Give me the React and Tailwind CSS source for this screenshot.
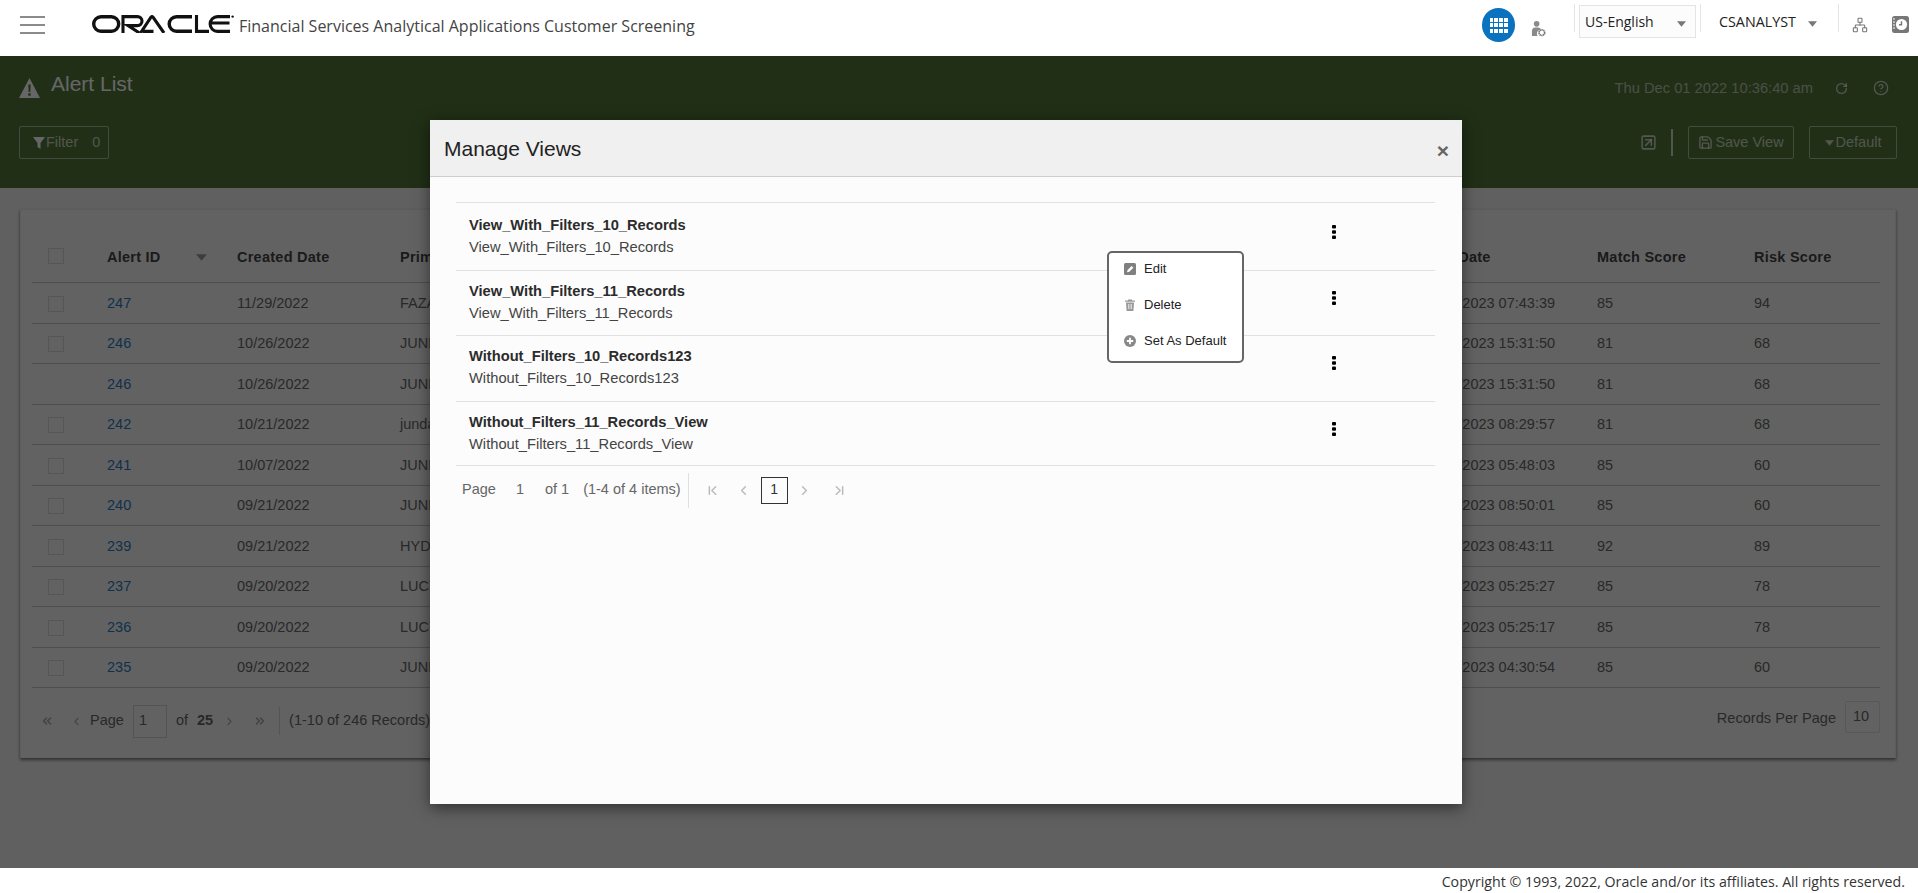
import React from "react";
import {
  ChevronLeft, ChevronRight, ChevronFirst, ChevronLast, ChevronsLeft, ChevronsRight,
  Network, RotateCw, CircleHelp, Save, SquareArrowUpRight,
} from "lucide-react";

const rows = [
  { id: "247", created: "11/29/2022", name: "FAZAL AHMED", run: "01/05/2023 07:43:39", match: "85", risk: "94", check: true },
  { id: "246", created: "10/26/2022", name: "JUNDALLAH", run: "01/04/2023 15:31:50", match: "81", risk: "68", check: true },
  { id: "246", created: "10/26/2022", name: "JUNDALLAH", run: "01/04/2023 15:31:50", match: "81", risk: "68", check: false },
  { id: "242", created: "10/21/2022", name: "jundallah", run: "01/04/2023 08:29:57", match: "81", risk: "68", check: true },
  { id: "241", created: "10/07/2022", name: "JUNDALLAH", run: "01/03/2023 05:48:03", match: "85", risk: "60", check: true },
  { id: "240", created: "09/21/2022", name: "JUNDALLAH", run: "01/03/2023 08:50:01", match: "85", risk: "60", check: true },
  { id: "239", created: "09/21/2022", name: "HYDER", run: "01/03/2023 08:43:11", match: "92", risk: "89", check: true },
  { id: "237", created: "09/20/2022", name: "LUCY", run: "01/02/2023 05:25:27", match: "85", risk: "78", check: true },
  { id: "236", created: "09/20/2022", name: "LUCY", run: "01/02/2023 05:25:17", match: "85", risk: "78", check: true },
  { id: "235", created: "09/20/2022", name: "JUNDALLAH", run: "01/02/2023 04:30:54", match: "85", risk: "60", check: true },
];

const views = [
  { name: "View_With_Filters_10_Records", h: "h-[68px] pt-[11px]" },
  { name: "View_With_Filters_11_Records", h: "h-[65px] pt-[9px]" },
  { name: "Without_Filters_10_Records123", h: "h-[66px] pt-[9px]" },
  { name: "Without_Filters_11_Records_View", h: "h-[64px] pt-[9px]" },
];

const COLS = "grid grid-cols-[75px_130px_163px_1025px_172px_157px_126px] items-center";

function Caret({ className }) {
  return (
    <svg viewBox="0 0 10 6" className={className}>
      <path d="M0 0h10L5 6z" fill="currentColor" />
    </svg>
  );
}

function Logo() {
  return (
    <svg viewBox="0 0 142 18" className="w-[142px] h-[18px] shrink-0" fill="none" stroke="#111">
      <rect x="1.7" y="1.7" width="25" height="14.600" rx="7.300" strokeWidth="3.400" />
      <path d="M31 18V1.600h14.500a4.500 4.500 0 0 1 0 9H36L47.500 18" strokeWidth="3.100" />
      <path d="M51 16.400h10.500M48.500 18L59 2.200c.6-.9 1.400-.9 2 0L72 18" strokeWidth="3.100" />
      <path d="M100 1.700H84.500a7.300 7.300 0 0 0 0 14.600H100" strokeWidth="3.400" />
      <path d="M104.500 0v16.400H117" strokeWidth="3.100" />
      <path d="M138 1.600h-12.500a7.400 7.400 0 0 0 0 14.800H138M119.500 8h18" strokeWidth="3.100" />
      <circle cx="140.600" cy="1.600" r="1.200" fill="#111" stroke="none" />
    </svg>
  );
}

function GridCircle() {
  return (
    <div className="w-[33px] h-[34px] rounded-full bg-[#0a72bf] flex items-center justify-center shrink-0">
      <div className="grid grid-cols-4 gap-[1.500px] w-[18px]">
        {Array.from({ length: 12 }).map((_, i) => (
          <span key={i} className="h-[4px] bg-white block" />
        ))}
      </div>
    </div>
  );
}

function UserGear() {
  return (
    <svg viewBox="0 0 16 17" className="w-[15px] h-[16px] shrink-0">
      <circle cx="6" cy="3" r="3" fill="#8a8a8a" />
      <path d="M1 16V10.500C1 8.500 2.500 7 4.500 7h3c1.500 0 2.500.8 3 2a4.500 4.500 0 0 0-3.500 7z" fill="#8a8a8a" />
      <circle cx="11.600" cy="12.400" r="3" fill="none" stroke="#7a7a7a" strokeWidth="1.800" strokeDasharray="1.500 .4" />
    </svg>
  );
}

function ClockBook() {
  return (
    <svg viewBox="0 0 17 17" className="w-[17px] h-[17px] shrink-0">
      <rect x="0" y="0" width="17" height="17" rx="2.500" fill="#777" />
      <circle cx="9.500" cy="8.500" r="5.600" fill="#fff" />
      <path d="M9.500 5.200v3.600H7" fill="none" stroke="#777" strokeWidth="1.400" />
      <path d="M1 3h2M1 6h2M1 9h2M1 12h2" stroke="#fff" strokeWidth="1" />
    </svg>
  );
}

function Kebab({ className }) {
  return (
    <svg viewBox="0 0 4 14" className={className}>
      <rect width="4" height="3.600" rx="1" fill="#000" />
      <rect y="5.200" width="4" height="3.600" rx="1" fill="#000" />
      <rect y="10.400" width="4" height="3.600" rx="1" fill="#000" />
    </svg>
  );
}

function Box() {
  return <span className="block w-[16px] h-[16px] border border-[#d8d8d8] bg-[#f4f4f4]" />;
}

function Header() {
  return (
    <header className="relative z-10 h-14 shrink-0 bg-white flex items-center pl-[20px] pr-[9px] font-['Open_Sans',sans-serif]">
      <div className="w-[25px] flex flex-col gap-[6px] shrink-0 mt-[-7px]">
        <span className="block h-[2px] bg-[#8b8b8b]" />
        <span className="block h-[2px] bg-[#8b8b8b]" />
        <span className="block h-[2px] bg-[#8b8b8b]" />
      </div>
      <div className="ml-[47px] mt-[-8px] flex items-center">
        <Logo />
        <span className="ml-[5px] mt-[4px] text-[16px] text-[#444] whitespace-nowrap">
          Financial Services Analytical Applications Customer Screening
        </span>
      </div>
      <div className="ml-auto flex items-center mt-[-6px]">
        <GridCircle />
        <div className="ml-[16px] mt-[7px]"><UserGear /></div>
        <span className="ml-[28px] w-px h-[28px] bg-[#e4e4e4] block mt-[-14px]" />
        <div className="ml-[4px] w-[117px] h-[33px] border border-[#e4e4e4] bg-[#fcfcfc] flex items-center pl-[5px] text-[14px] text-[#222] mt-[-7px]">
          US-English
          <Caret className="w-[9px] h-[6px] ml-auto mr-[9px] text-[#777] mt-[4px]" />
        </div>
        <span className="ml-[4px] w-px h-[28px] bg-[#e4e4e4] block mt-[-14px]" />
        <span className="ml-[18px] w-[78px] text-[14.300px] text-[#222] whitespace-nowrap mt-[-7px]">CSANALYST</span>
        <Caret className="w-[9px] h-[6px] ml-[11px] text-[#777] mt-[-3px]" />
        <span className="ml-[21px] w-px h-[28px] bg-[#e4e4e4] block mt-[-14px]" />
        <Network className="ml-[13px] w-[16px] h-[16px] text-[#777]" strokeWidth={1.6} />
        <div className="ml-[24px] mt-[-2px]"><ClockBook /></div>
      </div>
    </header>
  );
}

function GreenBand() {
  return (
    <section className="h-[132px] shrink-0 bg-[#527639] pl-[19px] pr-[21px] flex flex-col text-white">
      <div className="h-[70px] flex items-center shrink-0 pb-[14px]">
        <svg viewBox="0 0 21 20" className="w-[21px] h-[20px] mt-[8px]">
          <path d="M10.500 0L21 20H0z" fill="#fff" />
          <path d="M9.300 6.500h2.400l-.4 7.500H9.700zM9.300 15.300h2.400v2.400H9.300z" fill="#527639" />
        </svg>
        <span className="ml-[11px] text-[21px]">Alert List</span>
        <span className="ml-auto text-[14.700px] text-white/60 mt-[8px] mr-[22px]">Thu Dec 01 2022 10:36:40 am</span>
        <RotateCw className="w-[13px] h-[13px] text-white/70 mr-[25px] mt-[8px]" strokeWidth={2.5} />
        <CircleHelp className="w-[16px] h-[16px] text-white/70 mr-[8px] mt-[8px]" strokeWidth={2} />
      </div>
      <div className="flex items-center h-[33px] text-[14.500px]">
        <div className="w-[90px] h-[33px] border border-white/50 rounded-[2px] flex items-center pl-[13px] pt-[1px] text-white/70">
          <svg viewBox="0 0 12 12" className="w-[12px] h-[12px]"><path d="M0 0h12L7.500 6v6L4.500 10V6z" fill="#fff" /></svg>
          <span className="ml-[1px]">Filter</span>
          <span className="ml-[14px]">0</span>
        </div>
        <SquareArrowUpRight className="ml-auto w-[17px] h-[17px] text-white/70" strokeWidth={2.2} />
        <span className="ml-[14px] w-[2px] h-[27px] bg-white/70 block" />
        <div className="ml-[15px] w-[106px] h-[33px] border border-white/50 rounded-[2px] flex items-center justify-center text-white/70">
          <Save className="w-[15px] h-[15px] mr-[2px]" strokeWidth={2.2} />Save View
        </div>
        <div className="ml-[15px] w-[88px] h-[33px] border border-white/50 rounded-[2px] flex items-center justify-center text-white/70">
          <Caret className="w-[9px] h-[6px] mr-[2px]" />Default
        </div>
      </div>
    </section>
  );
}

function AlertTable() {
  return (
    <section className="flex-1 bg-[#f0f0f0] pt-[21px] px-[20px]">
      <div className="h-[549px] w-[1876px] bg-[#f6f6f6] border-t border-x border-[#e6e6e6] shadow-[0_2px_3px_rgba(0,0,0,0.5)] pl-[11px] pr-[15px] pt-[23px] text-[14.500px] text-[#666]">
        <div className={`${COLS} h-[50px] border-b border-[#c4c4c4] font-bold text-[#444] tracking-[0.25px]`}>
          <div className="pl-[16px] pb-[4px]"><Box /></div>
          <div className="flex items-center">
            Alert ID
            <Caret className="w-[11px] h-[7px] ml-[35px] text-[#999]" />
          </div>
          <div>Created Date</div>
          <div>Primary Name</div>
          <div>Run Date</div>
          <div>Match Score</div>
          <div>Risk Score</div>
        </div>
        {rows.map((r, i) => (
          <div key={i} className={`${COLS} h-[40.500px] border-b border-[#c4c4c4] pt-[2px]`}>
            <div className="pl-[16px]">{r.check ? <Box /> : null}</div>
            <div className="text-[#2a7ac0]">{r.id}</div>
            <div>{r.created}</div>
            <div>{r.name}</div>
            <div className="whitespace-nowrap ml-[-3px]">{r.run}</div>
            <div>{r.match}</div>
            <div>{r.risk}</div>
          </div>
        ))}
        <div className="h-[64px] flex items-center">
          <div className="flex items-center mt-[2px]">
            <ChevronsLeft className="ml-[8px] w-[14px] h-[14px] text-[#aaa]" strokeWidth={2.8} />
            <ChevronLeft className="ml-[16px] w-[13px] h-[13px] text-[#aaa]" strokeWidth={2} />
            <span className="ml-[7px]">Page</span>
            <div className="ml-[9px] w-[34px] h-[33px] border border-[#cfcfcf] pl-[5px] flex items-center">1</div>
            <span className="ml-[9px]">of</span>
            <span className="ml-[9px] font-bold">25</span>
            <ChevronRight className="ml-[10px] w-[13px] h-[13px] text-[#aaa]" strokeWidth={2} />
            <ChevronsRight className="ml-[17px] w-[14px] h-[14px] text-[#aaa]" strokeWidth={2.8} />
            <span className="ml-[12px] w-px h-[28px] bg-[#d4d4d4] block" />
            <span className="ml-[9px] whitespace-nowrap">(1-10 of 246 Records)</span>
          </div>
          <span className="ml-auto whitespace-nowrap text-[14.600px] mt-[-3px]">Records Per Page</span>
          <div className="ml-[9px] w-[35px] h-[32px] border border-[#dcdcdc] rounded-[2px] pl-[7px] flex items-center mt-[-6px]">10</div>
        </div>
      </div>
    </section>
  );
}

function PopupMenu() {
  return (
    <div className="absolute left-[677px] top-[131px] w-[137px] h-[112px] bg-white border-2 border-[#666] rounded-[5px] flex flex-col text-[13px] text-[#222] font-['Liberation_Sans',sans-serif]">
      <div className="h-[36px] flex items-center pl-[15px] gap-[8px] mt-[-2px]">
        <svg viewBox="0 0 12 12" className="w-[12px] h-[12px]">
          <rect width="12" height="12" rx="1.500" fill="#808080" />
          <path d="M3 9.300l.6-2.300 4-4 1.700 1.700-4 4z" fill="#fff" />
        </svg>
        Edit
      </div>
      <div className="h-[36px] flex items-center pl-[15px] gap-[8px]">
        <svg viewBox="0 0 12 12" className="w-[12px] h-[12px]">
          <path d="M4 1.500V.5h4v1h3v1.200H1V1.500zM2 3.500h8L9.400 12H2.600z" fill="#999" />
          <path d="M4.500 5v5M6 5v5M7.500 5v5" stroke="#fff" strokeWidth=".6" />
        </svg>
        Delete
      </div>
      <div className="h-[36px] flex items-center pl-[15px] gap-[8px]">
        <svg viewBox="0 0 12 12" className="w-[12px] h-[12px]">
          <circle cx="6" cy="6" r="6" fill="#888" />
          <path d="M6 2.800v6.400M2.800 6h6.400" stroke="#fff" strokeWidth="1.800" />
        </svg>
        Set As Default
      </div>
    </div>
  );
}

function ModalPager() {
  return (
    <div className="h-[48px] flex items-center text-[#666] text-[14.500px]">
      <span className="ml-[6px]">Page</span>
      <span className="ml-[20px]">1</span>
      <span className="ml-[21px]">of 1</span>
      <span className="ml-[14px] whitespace-nowrap">(1-4 of 4 items)</span>
      <span className="ml-[7px] w-px h-[35px] bg-[#e0e0e0] block" />
      <ChevronFirst className="ml-[16px] w-[15px] h-[15px] text-[#bbb]" strokeWidth={2.4} />
      <ChevronLeft className="ml-[16px] w-[15px] h-[15px] text-[#bbb]" strokeWidth={2.4} />
      <div className="ml-[10px] w-[27px] h-[27px] border border-[#333] flex items-center justify-center text-[#333] text-[14px] pb-[2px]">1</div>
      <ChevronRight className="ml-[9px] w-[15px] h-[15px] text-[#bbb]" strokeWidth={2.4} />
      <ChevronLast className="ml-[20px] w-[15px] h-[15px] text-[#bbb]" strokeWidth={2.4} />
    </div>
  );
}

function Modal() {
  return (
    <div className="absolute left-[430px] top-[64px] w-[1032px] h-[684px] bg-[#fcfcfc] shadow-[0_4px_14px_rgba(0,0,0,0.5)] flex flex-col font-['Liberation_Sans',sans-serif]">
      <div className="h-[57px] shrink-0 bg-[#f0f0f0] border-b border-[#cfcfcf] flex items-center pl-[14px] pr-[13px]">
        <h2 className="text-[21px] text-[#222] mt-[1px]">Manage Views</h2>
        <span className="ml-auto text-[21px] leading-none font-bold text-[#666] mt-[4px]">×</span>
      </div>
      <div className="pl-[26px] pr-[27px] pt-[25px]">
        <div className="border-t border-[#e2e2e2]">
          {views.map((v) => (
            <div key={v.name} className={`${v.h} border-b border-[#e2e2e2] pl-[13px] flex items-start`}>
              <div className="leading-[22px]">
                <div className="font-bold text-[14.700px] text-[#2b2b2b]">{v.name}</div>
                <div className="text-[14.700px] text-[#444]">{v.name}</div>
              </div>
              <Kebab className="absolute left-[902px] w-[4px] h-[14px] translate-y-[11px]" />
            </div>
          ))}
        </div>
        <ModalPager />
      </div>
      <PopupMenu />
    </div>
  );
}

export default function App() {
  return (
    <div className="h-screen w-full overflow-hidden flex flex-col bg-white font-['Liberation_Sans',sans-serif]">
      <Header />
      <main className="relative flex-1 flex flex-col overflow-hidden">
        <GreenBand />
        <AlertTable />
        <div className="absolute inset-0 bg-black/60" />
        <Modal />
      </main>
      <footer className="relative z-10 h-[25px] shrink-0 bg-white flex items-center justify-end pr-[13px] pt-[3px] text-[14.200px] text-[#333] font-['Open_Sans',sans-serif]">
        Copyright © 1993, 2022, Oracle and/or its affiliates. All rights reserved.
      </footer>
    </div>
  );
}
